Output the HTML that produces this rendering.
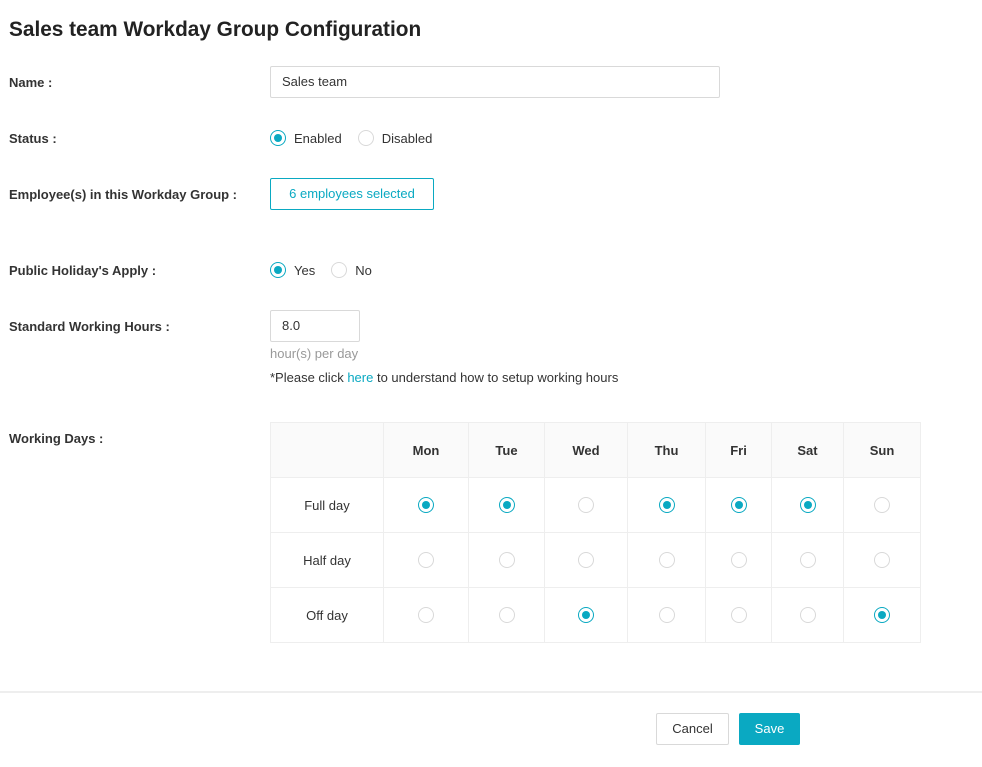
<!DOCTYPE html>
<html><head><meta charset="utf-8"><style>
*{box-sizing:border-box;margin:0;padding:0}
body{width:982px;height:767px;background:#fff;font-family:"Liberation Sans",sans-serif;font-size:13px;color:#333;position:relative;overflow:hidden}
.a{position:absolute}
h1{position:absolute;left:9px;top:18px;font-size:20.8px;font-weight:bold;color:#222}
.lbl{position:absolute;left:9px;font-weight:bold;color:#333;font-size:13px}
.r{display:inline-block;width:16px;height:16px;border:1px solid #d9d9d9;border-radius:50%;vertical-align:middle;position:relative;background:#fff}
.r.on{border-color:#0aa9c2}
.r.on:after{content:"";position:absolute;left:3px;top:3px;width:8px;height:8px;border-radius:50%;background:#0aa9c2}
.opt{position:absolute;display:flex;align-items:center;gap:8px;font-size:13px;color:#333}
table{position:absolute;left:270px;top:422px;border-collapse:collapse}
td{border:1px solid #eee;text-align:center;height:55px;font-size:13px}
tr:first-child td{background:#fafafa;font-weight:bold}
td .r{display:block;margin:0 auto}
</style></head><body>
<h1>Sales team Workday Group Configuration</h1>
<div class="lbl" style="top:75px">Name :</div>
<div class="a" style="left:270px;top:66px;width:450px;height:32px;border:1px solid #d9d9d9;border-radius:2px;padding:7px 11px">Sales team</div>
<div class="lbl" style="top:131px">Status :</div>
<div class="opt" style="left:270px;top:130px"><span class="r on"></span>Enabled<span class="r" style="margin-left:8px"></span>Disabled</div>
<div class="lbl" style="top:187px">Employee(s) in this Workday Group :</div>
<div class="a" style="left:270px;top:178px;width:164px;height:32px;border:1px solid #0aa9c2;border-radius:2px;color:#0aa9c2;text-align:center;line-height:30px">6 employees selected</div>
<div class="lbl" style="top:263px">Public Holiday's Apply :</div>
<div class="opt" style="left:270px;top:262px"><span class="r on"></span>Yes<span class="r" style="margin-left:8px"></span>No</div>
<div class="lbl" style="top:319px">Standard Working Hours :</div>
<div class="a" style="left:270px;top:310px;width:90px;height:32px;border:1px solid #d9d9d9;border-radius:2px;padding:7px 11px">8.0</div>
<div class="a" style="left:270px;top:346px;color:#999">hour(s) per day</div>
<div class="a" style="left:270px;top:370px">*Please click <span style="color:#0aa9c2">here</span> to understand how to setup working hours</div>
<div class="lbl" style="top:431px">Working Days :</div>
<table>
<tr><td style="width:113px"></td><td style="width:85px">Mon</td><td style="width:76px">Tue</td><td style="width:83px">Wed</td><td style="width:78px">Thu</td><td style="width:66px">Fri</td><td style="width:72px">Sat</td><td style="width:77px">Sun</td></tr>
<tr><td>Full day</td><td><span class="r on"></span></td><td><span class="r on"></span></td><td><span class="r"></span></td><td><span class="r on"></span></td><td><span class="r on"></span></td><td><span class="r on"></span></td><td><span class="r"></span></td></tr>
<tr><td>Half day</td><td><span class="r"></span></td><td><span class="r"></span></td><td><span class="r"></span></td><td><span class="r"></span></td><td><span class="r"></span></td><td><span class="r"></span></td><td><span class="r"></span></td></tr>
<tr><td>Off day</td><td><span class="r"></span></td><td><span class="r"></span></td><td><span class="r on"></span></td><td><span class="r"></span></td><td><span class="r"></span></td><td><span class="r"></span></td><td><span class="r on"></span></td></tr>
</table>
<div class="a" style="left:0;top:691px;width:982px;height:2px;background:#eee"></div>
<div class="a" style="left:656px;top:713px;width:73px;height:32px;border:1px solid #d9d9d9;border-radius:2px;text-align:center;line-height:30px">Cancel</div>
<div class="a" style="left:739px;top:713px;width:61px;height:32px;background:#0aa9c2;border-radius:2px;color:#fff;text-align:center;line-height:32px">Save</div>
</body></html>
